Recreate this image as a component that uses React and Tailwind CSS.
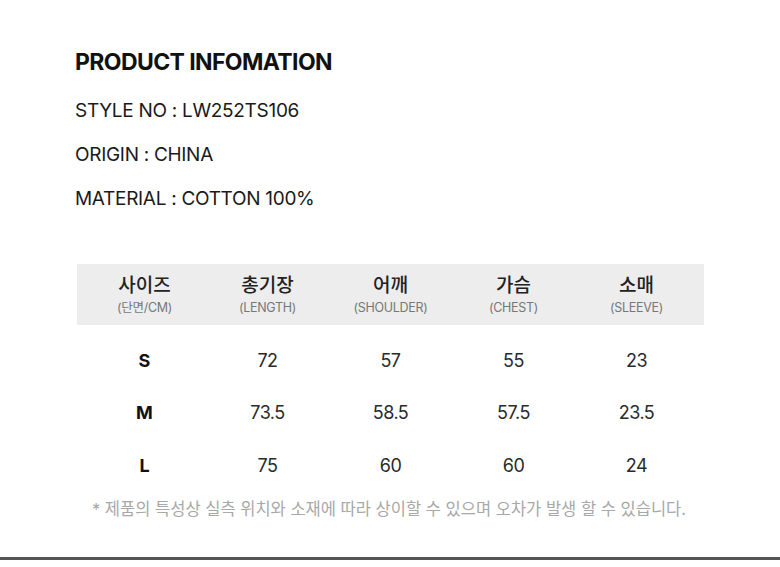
export default function App() {
  const font = { fontFamily: 'Inter, "Noto Sans CJK KR", sans-serif' };
  const cols = [
    ["사이즈", "(단면/CM)"],
    ["총기장", "(LENGTH)"],
    ["어깨", "(SHOULDER)"],
    ["가슴", "(CHEST)"],
    ["소매", "(SLEEVE)"],
  ];
  const rows = [
    ["S", "72", "57", "55", "23"],
    ["M", "73.5", "58.5", "57.5", "23.5"],
    ["L", "75", "60", "60", "24"],
  ];
  return (
    <div className="w-[780px] h-[567px] bg-white text-[#111] flex flex-col" style={font}>
      <div className="pl-[75px] pt-[47px] flex flex-col">
        <h1 className="text-[23px] font-bold tracking-[-0.6px] leading-[30px]">PRODUCT INFOMATION</h1>
        <div className="mt-[21px] flex flex-col gap-[18px] text-[19px] leading-[26px] tracking-[-0.3px] text-[#1a1a1a]">
          <p>STYLE NO : LW252TS106</p>
          <p>ORIGIN : CHINA</p>
          <p>MATERIAL : COTTON 100%</p>
        </div>
      </div>
      <div className="mt-[52px] ml-[77px] w-[627px]">
        <div className="bg-[#ededed] h-[61px] px-[6px] grid grid-cols-5 items-center">
          {cols.map(([k, e]) => (
            <div key={k} className="flex flex-col items-center pt-[2px]">
              <span className="text-[19px] font-medium leading-[24px] text-[#222]">{k}</span>
              <span className="text-[12.5px] leading-[18px] mt-[1px] text-[#777] tracking-[-0.3px]">{e}</span>
            </div>
          ))}
        </div>
        <div className="px-[6px] pt-[9px] flex flex-col">
          {rows.map((r) => (
            <div key={r[0]} className="grid grid-cols-5 items-center h-[52.5px]">
              {r.map((v, i) => (
                <span
                  key={i}
                  className={
                    i === 0
                      ? "text-center text-[18px] font-bold text-[#111]"
                      : "text-center text-[18px] text-[#2a2a2a] tracking-[-0.5px]"
                  }
                >
                  {v}
                </span>
              ))}
            </div>
          ))}
        </div>
      </div>
      <p className="mt-[5px] text-center text-[16.5px] text-[#a8a8a8] pr-[2px]">
        * 제품의 특성상 실측 위치와 소재에 따라 상이할 수 있으며 오차가 발생 할 수 있습니다.
      </p>
      <div className="mt-auto mb-[7px] h-[3px] bg-[#555]" />
    </div>
  );
}
